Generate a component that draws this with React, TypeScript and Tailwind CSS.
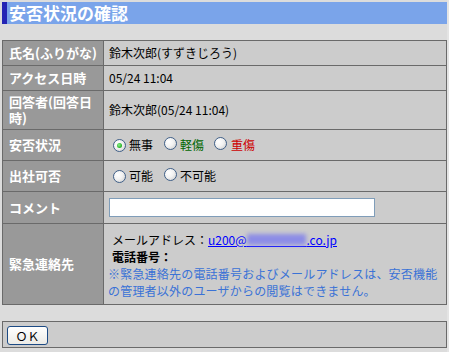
import React from "react";

const font = { fontFamily: '"Noto Sans CJK JP", "Noto Sans", sans-serif' };

function Radio({ checked }: { checked?: boolean }) {
  return (
    <span className="relative inline-block w-[13px] h-[13px] rounded-full border border-[#3f5f88] bg-[radial-gradient(circle_at_35%_35%,#ffffff_0%,#f2f2f2_45%,#c9c9c9_100%)] shrink-0">
      {checked && (
        <span className="absolute left-[3px] top-[3px] w-[5px] h-[5px] rounded-full bg-[radial-gradient(circle_at_40%_40%,#8ef08e_0%,#2fb82f_60%,#1c8a1c_100%)]" />
      )}
    </span>
  );
}

function Label({ children }: { children: React.ReactNode }) {
  return (
    <div className="bg-[#999999] pl-[6px] pr-[2px] flex items-center text-white font-bold text-[13px] leading-[16px]">
      <div>{children}</div>
    </div>
  );
}

function Value({ children, className = "" }: { children: React.ReactNode; className?: string }) {
  return (
    <div className={"bg-[#cccccc] pl-[5px] flex items-center text-black text-[12px] leading-[16px] " + className}>
      {children}
    </div>
  );
}

export default function App() {
  return (
    <div className="w-[449px] h-[352px] bg-[#e4e4e4]" style={font}>
      <div className="w-[447px] h-[352px] bg-[#dcdcdc] pl-[2px] pt-[2px]">
        <div className="w-[445px] h-[22px] bg-[#7aa4ea] flex items-center">
          <div className="w-[5px] h-full bg-[#2424b4]" />
          <div className="pl-[2px] text-white font-bold text-[17px] leading-[22px]">安否状況の確認</div>
        </div>

        <div className="mt-[16px] w-[445px] grid grid-cols-[100px_342px] grid-rows-[24px_24px_38px_30px_30px_31px_80px] gap-px bg-[#6a6a6a] border border-[#6a6a6a]">
          <Label>氏名(ふりがな)</Label>
          <Value>鈴木次郎(すずきじろう)</Value>

          <Label>アクセス日時</Label>
          <Value>05/24 11:04</Value>

          <Label>回答者(回答日時)</Label>
          <Value>鈴木次郎(05/24 11:04)</Value>

          <Label>安否状況</Label>
          <Value className="pl-[9px]">
            <Radio checked />
            <span className="ml-[3px]">無事</span>
            <span className="ml-[11px]"><Radio /></span>
            <span className="ml-[3px] text-[#006600]">軽傷</span>
            <span className="ml-[10px]"><Radio /></span>
            <span className="ml-[4px] text-[#cc0000]">重傷</span>
          </Value>

          <Label>出社可否</Label>
          <Value className="pl-[9px]">
            <Radio />
            <span className="ml-[3px]">可能</span>
            <span className="ml-[11px]"><Radio /></span>
            <span className="ml-[3px]">不可能</span>
          </Value>

          <Label>コメント</Label>
          <Value>
            <div className="w-[266px] h-[19px] bg-white border border-[#7f9db9]" />
          </Value>

          <Label>緊急連絡先</Label>
          <div className="bg-[#cccccc] pl-[4px] pt-[7px] text-[12px] leading-[17px]">
            <div className="ml-[4px]">
              メールアドレス：
              <a className="text-[#0000ff] underline">
                u200@
                <span className="relative text-transparent">
                  xxxxxxxxxx
                  <span className="absolute left-0 right-0 top-[3px] h-[11px] bg-[#8c8ce6] blur-[2px]" />
                </span>
                .co.jp
              </a>
            </div>
            <div className="ml-[4px] font-bold">電話番号：</div>
            <div className="text-[#3a72d6] tracking-[0.2px]">
              ※緊急連絡先の電話番号およびメールアドレスは、安否機能
              <br />
              の管理者以外のユーザからの閲覧はできません。
            </div>
          </div>
        </div>

        <div className="mt-[16px] w-[445px] h-[27px] bg-[#cccccc] border border-[#6a6a6a] pl-[4px] pt-[4px]">
          <div className="w-[41px] h-[19px] rounded-[3px] border border-[#1c4a84] bg-[linear-gradient(#ffffff,#ecebe6)] flex items-center justify-center text-[12px] leading-[17px] text-black">
            ＯＫ
          </div>
        </div>
      </div>
    </div>
  );
}
